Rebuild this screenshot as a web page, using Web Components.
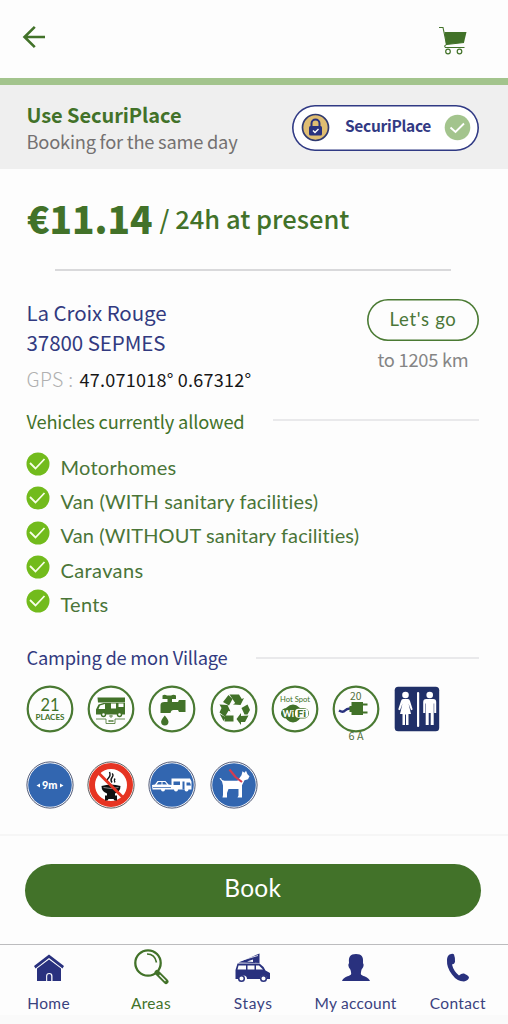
<!DOCTYPE html>
<html lang="en">
<head>
<meta charset="utf-8">
<title>Camping booking</title>
<style>
html,body{margin:0;padding:0;background:#fdfdfd}
body{width:508px;height:1024px;overflow:hidden;font-family:"Noto Sans CJK SC","Noto Sans",sans-serif}
</style>
</head>
<body>
<camp-app></camp-app>

<template id="t-app">
<style>
:host{display:flex;flex-direction:column;width:508px;height:1024px;background:#fdfdfd;
--green:#427229;--blue:#29317e;color:var(--green)}
.price{display:flex;height:60px;padding:19px 0 0 27px;font-weight:700;gap:7px}
.price fit-line{line-height:60px}
.rule{height:1.500px;background:#d9d9db;margin:21px 57px .5px 55px;flex:none}
.place{display:flex;justify-content:space-between;padding:0 29px 0 26.500px;height:121px;margin-top:14px;flex:none}
.left{padding-top:13px;color:#323a80}
.left .n{font-size:20.500px;line-height:29.600px}
.gps{display:flex;gap:6px;margin-top:6.500px;font-size:19.500px;line-height:30px;color:#161616}
.gps .g{color:#b0b0b0;font-weight:300}
.gps .v{font-size:18px}
.right{display:flex;flex-direction:column;align-items:center;padding-top:14px;width:112px;font-size:18.300px}
.go{box-sizing:border-box;width:112px;height:42px;box-shadow:inset 0 0 0 1.600px #4a7a33;border-radius:21px;display:flex;justify-content:center;font-family:Lato,sans-serif;line-height:41.500px;font-size:18.500px;color:#4a7738}
.km{line-height:28px;margin-top:4px;color:#858585}
.list{margin-top:15.500px;height:171px;padding-left:26px;flex:none}
.icons{display:grid;grid-template-columns:repeat(7,48px);column-gap:13.200px;row-gap:27.500px;padding:14px 0 0 26px;flex:none}
.book{margin-top:25px;border-top:2px solid #f6f6f6;height:109px;box-sizing:border-box;padding:28px 27.500px 0 25px;flex:none}
.btn{height:53px;border-radius:27px;background:#427229;color:#fff;display:flex;justify-content:center;font:24.500px/48px Lato,sans-serif}
</style>
<app-header></app-header>
<securi-banner></securi-banner>
<div class="price"><fit-line w="125.500" style="font-size:37px;font-weight:900">€11.14</fit-line><fit-line w="190" style="font-size:25.500px;font-weight:500">/ 24h at present</fit-line></div>
<div class="rule"></div>
<div class="place">
 <div class="left">
  <fit-line class="n" w="140">La Croix Rouge</fit-line>
  <fit-line class="n" w="139">37800 SEPMES</fit-line>
  <div class="gps"><fit-line class="g" w="47">GPS :</fit-line><fit-line class="v" w="172">47.071018° 0.67312°</fit-line></div>
 </div>
 <div class="right"><div class="go"><fit-line w="67">Let's go</fit-line></div><fit-line class="km" w="91">to 1205 km</fit-line></div>
</div>
<section-title w="218" gap="28" style="margin-top:.5px;--line-top:12px">Vehicles currently allowed</section-title>
<div class="list">
 <vehicle-item w="116">Motorhomes</vehicle-item>
 <vehicle-item w="258">Van (WITH sanitary facilities)</vehicle-item>
 <vehicle-item w="299">Van (WITHOUT sanitary facilities)</vehicle-item>
 <vehicle-item w="83">Caravans</vehicle-item>
 <vehicle-item w="48">Tents</vehicle-item>
</div>
<section-title w="201" gap="28" style="margin-top:22px;color:#323a80;--line-top:13.500px">Camping de mon Village</section-title>
<div class="icons">
 <amenity-icon kind="ring"><svg viewBox="0 0 48 48"><g fill="#427229"><text x="14.500" y="25.500" font-family="Lato" font-weight="400" font-size="17.500" textLength="19" lengthAdjust="spacingAndGlyphs">21</text><text x="9.500" y="34.500" font-family="Lato" font-weight="700" font-size="7.800" textLength="29" lengthAdjust="spacingAndGlyphs">PLACES</text></g></svg></amenity-icon>
 <amenity-icon kind="ring"><svg viewBox="0 0 48 48"><path fill="#427229" d="M10.500 12.500h27.500v5H11zM11.500 19.500l5-1.500h21.500v11.500h-3a2.800 2.800 0 0 0-5 0H19a2.800 2.800 0 0 0-5 0H9v-5z"/><path fill="#fdfdfd" d="M13 20.500l5-1.500v5h-6.500zM24 18.500h5v5h-5zM31.500 18.500h5v3.500h-5z"/><circle cx="16.500" cy="29.500" r="2" fill="#fff" stroke="#427229" stroke-width="1.400"/><circle cx="32.500" cy="29.500" r="2" fill="#fff" stroke="#427229" stroke-width="1.400"/><path fill="none" stroke="#427229" stroke-width=".8" d="M9 34h10v4.500h9V34h10M22 31h4M24 30v3M21.500 36.500l5-1M21.500 35.500l5 1"/></svg></amenity-icon>
 <amenity-icon kind="ring"><svg viewBox="0 0 48 48"><path fill="#427229" d="M14.500 10.500q2-1.500 4.500 0h4q2.500-1.500 5 0v3.500h-4v3h6l1-2h6.500v12h-6.500l-1-2h-4.500q-2.500 0-3 3H12.500V20q0-3 4-3h3v-3h-5z"/><path fill="#427229" d="M16.800 30.500q3.700 4.500 3.700 6.200a3.700 3.700 0 0 1-7.400 0q0-1.700 3.700-6.200z"/></svg></amenity-icon>
 <amenity-icon kind="ring"><svg viewBox="0 0 48 48"><g fill="#427229"><path d="M19.500 9.500h9.500l2.800 4.500 2.200-1-3.500 7-7.500-.5 2.200-1.500z"/><path d="M18.500 10l4 4-3.500 6.500-6-3.500z"/><path d="M31.500 23l6-3.500 2.500 5.500-2.500 4.500h-3z"/><path d="M38.500 30.500l-3.500 6.500h-4v3l-4.500-6 4.500-6v3z"/><path d="M9.500 19.500l8 .5 3 6.500-2-.8-3.500 6-5.500-4.200 2-4.500z"/><path d="M14.500 36.500h9v-6h-8.500zM9.800 29l3.700 7 2-4z"/></g></svg></amenity-icon>
 <amenity-icon kind="ring"><svg viewBox="0 0 48 48"><text x="9" y="16.500" fill="#427229" font-family="Lato" font-size="7.500" textLength="30" lengthAdjust="spacingAndGlyphs">Hot Spot</text><ellipse cx="22" cy="28.500" rx="8.500" ry="9" fill="#427229"/><rect x="10" y="23" width="28" height="10.500" rx="5.200" fill="#427229"/><rect x="24" y="23.800" width="13.200" height="9" rx="3.500" fill="#fff"/><text x="11.500" y="31.700" fill="#fff" font-family="Lato" font-weight="900" font-size="9.500" textLength="11.500" lengthAdjust="spacingAndGlyphs">Wi</text><text x="26" y="31.700" fill="#427229" font-family="Lato" font-weight="900" font-size="9.500" textLength="9" lengthAdjust="spacingAndGlyphs">Fi</text></svg></amenity-icon>
 <amenity-icon kind="ring"><svg viewBox="0 0 48 48"><text x="18" y="14.500" fill="#53703f" font-family="Noto Sans CJK SC" font-size="10" textLength="11.500" lengthAdjust="spacingAndGlyphs">20</text><path d="M7 25.500q4 2.500 6 0t6-2" fill="none" stroke="#29317e" stroke-width="2.500"/><path fill="#427229" d="M19.500 17h11.500v1.500h4.500v2H31v6h4.500v2H31V30H19.500v-3h-2v-6h2z"/><text x="16.500" y="55" fill="#53703f" font-family="Noto Sans CJK SC" font-size="10" textLength="15" lengthAdjust="spacingAndGlyphs">6 A</text></svg></amenity-icon>
 <amenity-icon><svg viewBox="0 0 48 48"><rect x="1.700" y="1.800" width="44.500" height="44.500" rx="3.500" fill="#203068"/><rect x="24" y="7" width="2.200" height="35" rx="1" fill="#fff"/><g fill="#fff"><circle cx="12.500" cy="10" r="3.300"/><path d="M10 14h5q1.500 0 2 2l2.700 8.500-1.700.8-2.500-6.800 2.500 10.500h-2.500V40h-2.500V29.500h-1V40H9.500V29H7l2.500-10.500L7 25.300l-1.800-.8L8 16q.5-2 2-2z"/><circle cx="36.700" cy="10" r="3.300"/><path d="M33.200 14h7q3 0 3 3v11h-2V18.500h-.5V40h-3V28h-2v12h-3V18.500h-.5V28h-2V17q0-3 3-3z"/></g></svg></amenity-icon>
 <amenity-icon kind="blue"><svg viewBox="0 0 48 48"><path fill="#fff" d="M14 22.500v4l-3.500-2zM34 22.500v4l3.500-2z"/><text x="16" y="28" fill="#fff" font-family="Lato" font-weight="900" font-size="10.500" textLength="15.500" lengthAdjust="spacingAndGlyphs">9m</text></svg></amenity-icon>
 <amenity-icon kind="red"><svg viewBox="0 0 48 48"><path fill="#111" d="M14.500 25q9.500-3 19 0 0 5.500-5.500 7.500v2h2v5h-2.500l-1-1.500h-5l-1 1.500H18v-5h2v-2q-5.500-2-5.500-7.500z"/><path d="M16.500 26.500q7.500 2 15 0" stroke="#aaa" stroke-width=".8" fill="none"/><path fill="none" stroke="#111" stroke-width="1.400" d="M21 21.500q-2-2 .5-4.500t1-6M25 21.500q-2-2.500 0-5t0-4M28 21.500q-1.500-2 0-4"/><path stroke="#e63422" stroke-width="3" d="M10.500 11l27 27"/></svg></amenity-icon>
 <amenity-icon kind="blue"><svg viewBox="0 0 48 48"><path fill="#fff" d="M4 24l3-.5 2.500-3.500h8l3 3.500 3 .5v-6.500H42l1.500 3v8h-3a2 2 0 0 1-4 0H30a2 2 0 0 1-4 0h-9a2 2 0 0 1-4 0H4.500z"/><path fill="#3266b0" d="M10.500 21h3v2.500H8.500zM14.500 21h2.500l2 2.500h-4.500zM25.500 20.500h6.500v3.500h-6.500zM38.500 21.500h3.500l1 3h-4.500zM34.500 20.500h2v8h-2zM5 26h18v.8H5z"/></svg></amenity-icon>
 <amenity-icon kind="blue"><svg viewBox="0 0 48 48"><path fill="#fff" d="M9.500 17.500q1.500-1.500 2.500 1.500l2.500.7h13l4-5.500 1-4 2 1.500 1.500-2 1.500 3.500 2 2-1.500 3-3.500 1-2.500 5V36.500h-4.500l1-2V28H18.500l-1.500 4v4.500h-4.500l.5-2.500v-9.500l-1-4z"/><path fill="none" stroke="#d53c50" stroke-width="2.200" d="M19.500 8.500l6 7.500 6.500 5"/></svg></amenity-icon>
</div>
<div class="book"><div class="btn"><fit-line w="57">Book</fit-line></div></div>
<tab-bar></tab-bar>
</template>

<template id="t-header">
<style>:host{display:flex;justify-content:space-between;height:78px;border-bottom:7px solid #a3c48d;flex:none}
.b{width:26px;height:26px;margin:24px 0 0 21px}.c{width:30px;height:30px;margin:26px 40.500px 0 0}</style>
<svg class="b" viewBox="0 0 26 26" fill="none" stroke="#427229" stroke-width="2.600"><path d="M24 13H3.500M13.800 2.800L3.500 13l10.300 10.200"/></svg>
<svg class="c" viewBox="0 0 30 30"><path d="M6.500 6h22l-2.500 10.500L8 18.500z" fill="#427229"/><path d="M1 1.500h4l3.500 17q-3 1.500-1 3h19M8.500 18.500L26 16.500" fill="none" stroke="#427229" stroke-width="1.100"/><circle cx="10" cy="25.500" r="2.300" fill="none" stroke="#427229" stroke-width="1.200"/><circle cx="21.500" cy="25.500" r="2.300" fill="none" stroke="#427229" stroke-width="1.200"/></svg>
</template>

<template id="t-banner">
<style>:host{display:flex;justify-content:space-between;height:84px;background:#efefef;padding:0 29px 0 26.500px;flex:none}
.l{padding-top:16px}.a{font-size:20px;line-height:27px;font-weight:700}.s{font-size:18.300px;line-height:27px;color:#747171}
.pill{box-sizing:border-box;width:187px;height:46px;margin-top:19.500px;box-shadow:inset 0 0 0 1.600px #303a84;border-radius:23px;background:#fff;display:flex;align-items:center;padding:0 8px 0 9px;justify-content:space-between;color:#323a84;font-weight:700;font-size:15.500px;line-height:40px}
.pill fit-line{margin:-5px 0 0 1px}
svg{width:29px;height:29px}svg.k{width:27px;height:27px;margin-left:-1px}</style>
<div class="l"><fit-line class="a" w="155">Use SecuriPlace</fit-line><fit-line class="s" w="211">Booking for the same day</fit-line></div>
<div class="pill"><svg viewBox="0 0 29 29"><circle cx="14.500" cy="14.500" r="13" fill="#dfbd72" stroke="#303a70" stroke-width="1.700"/><path d="M10.500 14v-3.500a4 4 0 0 1 8 0V14" fill="none" stroke="#29317e" stroke-width="2"/><rect x="8" y="13" width="13" height="9.500" rx="1.500" fill="#29317e"/><path d="M12 17.500l2 2 3.500-3.500" fill="none" stroke="#fff" stroke-width="1.400"/></svg><fit-line w="86">SecuriPlace</fit-line><svg class="k" viewBox="0 0 27 27"><circle cx="13.500" cy="13.500" r="12.800" fill="#a3c48d"/><path d="M6.500 13.500l5 4.500 8.500-8.500" fill="none" stroke="#fff" stroke-width="1.900"/></svg></div>
</template>

<template id="t-section">
<style>:host{display:flex;height:28px;flex:none;padding:0 29px 0 26.500px;font-size:18.300px;line-height:28px}
i{flex:1;height:2px;background:#e9e9eb;margin-top:var(--line-top)}</style>
<fit-line><slot></slot></fit-line><i></i>
</template>

<template id="t-vehicle">
<style>:host{display:flex;height:34.200px;font:20px/35px Lato,sans-serif;color:#4a7538;gap:10.500px}
svg{width:24px;height:24px;margin-top:2.200px;flex:none}</style>
<svg viewBox="0 0 24 24"><circle cx="12" cy="12" r="11.500" fill="#72bb1c"/><path d="M4 11l5.500 5.500 9-9.500" fill="none" stroke="#f8ffe8" stroke-width="1.800"/></svg><fit-line><slot></slot></fit-line>
</template>

<template id="t-amenity">
<style>:host{display:block;width:48px;height:48px}
.d{display:grid;width:48px;height:48px}
.d>*,::slotted(svg){grid-area:1/1}
.r{display:none;width:48px;height:48px}
:host([kind=ring]) .ring,:host([kind=blue]) .blue,:host([kind=red]) .red{display:block}
::slotted(svg){display:block;width:48px;height:48px;overflow:visible}</style>
<div class="d">
<svg class="r ring" viewBox="0 0 48 48"><circle cx="24" cy="24" r="22.300" fill="none" stroke="#4a7a33" stroke-width="2.200"/></svg>
<svg class="r blue" viewBox="0 0 48 48"><circle cx="24" cy="24" r="23.100" fill="#fff" stroke="#3b4668" stroke-width=".9"/><circle cx="24" cy="24" r="21.800" fill="#3266b0"/></svg>
<svg class="r red" viewBox="0 0 48 48"><circle cx="24" cy="24" r="23.100" fill="#fff" stroke="#4b4648" stroke-width=".9"/><circle cx="24" cy="24" r="19" fill="#fff" stroke="#e63422" stroke-width="6"/></svg>
<slot></slot></div>
</template>

<template id="t-tabs">
<style>:host{display:grid;grid-template-columns:repeat(5,102.300px);margin-left:-2.500px;width:511.500px;height:80px;border-top:1px solid #bcbcbe;box-sizing:border-box;margin-top:auto;flex:none;background:linear-gradient(#fdfdfd 70px,#fafafa 70px)}</style>
<tab-item w="43" label="Home"><svg viewBox="0 0 36 40" fill="#29317e"><path d="M3 21L18 9.500 33 21l-1.500 2.500L18 13 4.500 23.500z"/><path fill-rule="evenodd" d="M6 23.500L18 14.500l12 9V36h-8.500v-5q0-3-3.200-3t-3.200 3v5H6z"/><path d="M16.200 36v-5q0-2 2-2t2 2v5z"/></svg></tab-item>
<tab-item w="40" label="Areas" style="color:#427229"><svg viewBox="0 0 36 40" fill="none" stroke="#427229"><circle cx="15" cy="18" r="12.700" stroke-width="2.300"/><path d="M14 9q8 0 9.500 8.500" stroke-width="1.600"/><path d="M24 27.500l9 9" stroke-width="5" stroke-linecap="round"/><path d="M26.500 30l6 6" stroke="#fdfdfd" stroke-width="1.100"/></svg></tab-item>
<tab-item w="39" label="Stays"><svg viewBox="0 0 36 40" fill="#29317e"><path d="M3.500 17.500L24.500 8.500v9.500z"/><path d="M2.500 18.500h22q4.500 3 6 7l4.500 2.500V34h-3a3.500 3.500 0 0 0-7 0H12a3.500 3.500 0 0 0-7 0H.5v-9z"/><path fill="#fdfdfd" d="M3.500 20.500h7.500v4H2.500zM12.500 20.500h7v4h-7zM21 20.500h3l4 4h-7zM12 16.500l6-2v2.500z"/><path d="M6 15.500L23 10.500" stroke="#fff" stroke-width=".8"/><g fill="#fdfdfd" stroke="#29317e" stroke-width="1.500"><circle cx="6.500" cy="33.500" r="2.800"/><circle cx="28.500" cy="33.500" r="2.800"/></g></svg></tab-item>
<tab-item w="82" label="My account"><svg viewBox="0 0 36 40" fill="#29317e"><path d="M18 9c6 0 7.500 3 7 8.500 0 2 1 1 .5 3.500s-2 2.500-2.300 5-1 3.500 1.300 4.500 6 2 7.500 5.500H4c1.500-3.500 5-4.500 7.500-5.500s1.600-2 1.300-4.500-2-2.500-2.300-5 .5-1.500.5-3.500C10.500 12 12 9 18 9z"/></svg></tab-item>
<tab-item w="56" label="Contact"><svg viewBox="0 0 36 40" fill="#29317e"><path d="M9.500 9.500q3.500-1.500 4.500 0 1.500 4 1 7.500-.5 2-3 2.500 1.500 6.500 7 11 2.500-2.500 5-2 4 1.500 5 3.500 0 3-5 4.500-7 0-12-7-5.500-7-5-14.500 0-4 2.500-5.500z"/></svg></tab-item>
</template>

<template id="t-tab">
<style>:host{display:flex;flex-direction:column;align-items:center;color:#3a427f;font:15.500px/24px Lato,sans-serif}
::slotted(svg){display:block;width:36px;height:40px;flex:none;margin-top:0}
fit-line{margin-top:5.500px}</style>
<slot></slot><fit-line></fit-line>
</template>

<script>
const use=(el,id)=>{const r=el.attachShadow({mode:'open'});r.append(document.getElementById(id).content.cloneNode(true));return r;};

// A single line of text tracked to fill a given width.
class FitLine extends HTMLElement{
  constructor(){super();this.attachShadow({mode:'open'}).innerHTML='<style>:host{display:block;width:max-content;white-space:nowrap;flex:none}span{display:inline-block}</style><span><slot></slot></span>';}
  connectedCallback(){this.fit();}
  fit(){
    const w=+this.getAttribute('w'),n=+this.getAttribute('n')||this.textContent.length;
    if(!w||!n)return;
    const s=this.shadowRoot.querySelector('span');
    s.style.letterSpacing='0px';
    const nat=s.getBoundingClientRect().width;
    s.style.letterSpacing=((w-nat)/n)+'px';
  }
}
class CampApp extends HTMLElement{
  constructor(){super();use(this,'t-app');}
  connectedCallback(){
    const walk=r=>r.querySelectorAll('*').forEach(e=>{if(e.shadowRoot)walk(e.shadowRoot);if(e.fit)e.fit();});
    requestAnimationFrame(()=>walk(this.shadowRoot));
    this.walk=walk;
  }
}
class AppHeader extends HTMLElement{constructor(){super();use(this,'t-header');}}
class SecuriBanner extends HTMLElement{constructor(){super();use(this,'t-banner');}}
const passWidth=el=>{const f=el.shadowRoot.querySelector('fit-line');f.setAttribute('w',el.getAttribute('w'));f.setAttribute('n',el.textContent.trim().length);};
class SectionTitle extends HTMLElement{
  constructor(){super();use(this,'t-section');}
  connectedCallback(){passWidth(this);this.shadowRoot.querySelector('i').style.marginLeft=this.getAttribute('gap')+'px';}
}
class VehicleItem extends HTMLElement{
  constructor(){super();use(this,'t-vehicle');}
  connectedCallback(){passWidth(this);}
}
class AmenityIcon extends HTMLElement{constructor(){super();use(this,'t-amenity');}}
class TabBar extends HTMLElement{constructor(){super();use(this,'t-tabs');}}
class TabItem extends HTMLElement{
  constructor(){super();use(this,'t-tab');}
  connectedCallback(){const f=this.shadowRoot.querySelector('fit-line');f.textContent=this.getAttribute('label');f.setAttribute('w',this.getAttribute('w'));}
}
customElements.define('app-header',AppHeader);
customElements.define('securi-banner',SecuriBanner);
customElements.define('section-title',SectionTitle);
customElements.define('vehicle-item',VehicleItem);
customElements.define('amenity-icon',AmenityIcon);
customElements.define('tab-item',TabItem);
customElements.define('tab-bar',TabBar);
customElements.define('fit-line',FitLine);
customElements.define('camp-app',CampApp);
const app=document.querySelector('camp-app');
app.walk(app.shadowRoot);
</script>
</body>
</html>
